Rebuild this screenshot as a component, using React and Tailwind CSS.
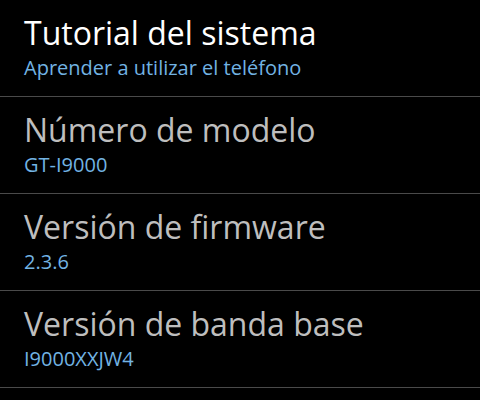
export default function App() {
  const rows = [
    { t: "Tutorial del sistema", s: "Aprender a utilizar el teléfono", white: true },
    { t: "Número de modelo", s: "GT-I9000" },
    { t: "Versión de firmware", s: "2.3.6" },
    { t: "Versión de banda base", s: "I9000XXJW4" },
  ];
  return (
    <div className="w-[480px] h-[400px] bg-black overflow-hidden" style={{ fontFamily: '"Open Sans", sans-serif' }}>
      {rows.map((r) => (
        <div key={r.t} className="h-[97px] border-b border-[#4a4a4a] pl-[24px] flex flex-col">
          <div className={`mt-[13px] text-[32px] leading-[40px] ${r.white ? "text-white" : "text-[#bebebe]"}`}>{r.t}</div>
          <div className="mt-[2px] text-[20px] leading-[26px] text-[#72b3e3]">{r.s}</div>
        </div>
      ))}
    </div>
  );
}
